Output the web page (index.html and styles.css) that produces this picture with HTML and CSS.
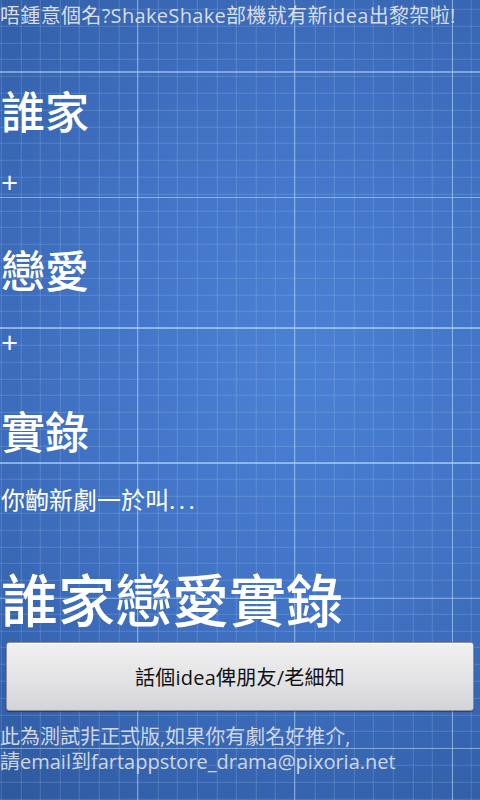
FILE: index.html
```html
<!DOCTYPE html>
<html lang="zh-Hant">
<head>
<meta charset="utf-8">
<title>ShakeShake</title>
<link rel="stylesheet" href="styles.css">
</head>
<body>
<main class="screen">
  <p class="tagline">唔鍾意個名?ShakeShake部機就有新idea出黎架啦!</p>
  <p class="part part-1">誰家</p>
  <p class="plus plus-1">+</p>
  <p class="part part-2">戀愛</p>
  <p class="plus plus-2">+</p>
  <p class="part part-3">實錄</p>
  <p class="lead">你齣新劇一於叫<span class="dots">...</span></p>
  <p class="title">誰家戀愛實錄</p>
  <button class="share" type="button">話個idea俾朋友/老細知</button>
  <div class="note">
    <p class="note-line">此為測試非正式版,如果你有劇名好推介,</p>
    <p class="note-line">請email到fartappstore_drama@pixoria.net</p>
  </div>
</main>
</body>
</html>
```

FILE: styles.css
```css
html, body {
  margin: 0;
  padding: 0;
  height: 100%;
}

body {
  font-family: "Open Sans", "Noto Sans CJK TC", sans-serif;
  background-color: #3a69b6;
  background-image:
    linear-gradient(to bottom,
      transparent 71px, rgba(190, 225, 255, 0.5) 71px, rgba(190, 225, 255, 0.5) 72.5px, transparent 72.5px,
      transparent 197px, rgba(190, 225, 255, 0.55) 197px, rgba(190, 225, 255, 0.55) 198.5px, transparent 198.5px,
      transparent 327px, rgba(190, 225, 255, 0.55) 327px, rgba(190, 225, 255, 0.55) 328.5px, transparent 328.5px,
      transparent 462px, rgba(190, 225, 255, 0.55) 462px, rgba(190, 225, 255, 0.55) 463.5px, transparent 463.5px,
      transparent 598px, rgba(190, 225, 255, 0.45) 598px, rgba(190, 225, 255, 0.45) 599.5px, transparent 599.5px,
      transparent 748px, rgba(190, 225, 255, 0.45) 748px, rgba(190, 225, 255, 0.45) 749.5px, transparent 749.5px),
    linear-gradient(to right,
      transparent 137px, rgba(190, 225, 255, 0.5) 137px, rgba(190, 225, 255, 0.5) 138.5px, transparent 138.5px,
      transparent 294px, rgba(190, 225, 255, 0.5) 294px, rgba(190, 225, 255, 0.5) 295.5px, transparent 295.5px,
      transparent 452px, rgba(190, 225, 255, 0.5) 452px, rgba(190, 225, 255, 0.5) 453.5px, transparent 453.5px),
    repeating-linear-gradient(to right,
      rgba(200, 225, 255, 0.18) 0, rgba(200, 225, 255, 0.18) 1px, transparent 1px, transparent 19.6px),
    repeating-linear-gradient(to bottom,
      rgba(200, 225, 255, 0.18) 0, rgba(200, 225, 255, 0.18) 1px, transparent 1px, transparent 16.8px),
    radial-gradient(ellipse 110% 75% at 62% 45%, #4b81d3 0%, #4274c6 40%, #3462ad 75%, #2b5495 100%);
  background-position: 0 0, 0 0, 0.8px 0, 0 8.8px, 0 0;
  background-size: 100% 100%, 100% 100%, auto, auto, 100% 100%;
  background-repeat: no-repeat, no-repeat, repeat, repeat, no-repeat;
}

.screen {
  display: flex;
  flex-direction: column;
  align-items: flex-start;
  height: 800px;
}

.screen p {
  margin: 0;
}

.tagline {
  font-size: 20px;
  line-height: 32px;
  color: #d9dde6;
  white-space: nowrap;
  letter-spacing: 0.33px;
}

.part {
  font-size: 44px;
  font-weight: 500;
  line-height: 60px;
  color: #ffffff;
  padding-left: 1px;
}

.screen .part-1 { margin-top: 50px; }
.screen .plus-1 { margin-top: 20px; }
.screen .part-2 { margin-top: 39px; }
.screen .plus-2 { margin-top: 21px; }
.screen .part-3 { margin-top: 40px; }

.plus {
  font-size: 30px;
  line-height: 40px;
  color: #ffffff;
  padding-left: 1px;
}

.screen .lead {
  font-size: 24px;
  line-height: 36px;
  color: #ffffff;
  margin-top: 20px;
  padding-left: 1px;
}

.dots {
  letter-spacing: 3.5px;
}

.screen .title {
  font-size: 57px;
  font-weight: 500;
  line-height: 70px;
  color: #ffffff;
  margin-top: 47px;
  padding-left: 1px;
}

.share {
  align-self: stretch;
  margin: 7px 6px 0;
  height: 69px;
  border: 1px solid #8a8f99;
  border-radius: 3px;
  background: linear-gradient(to bottom, #f0f0f0 0%, #e3e3e5 55%, #d3d4d8 100%);
  box-shadow: inset 0 1px 0 #ffffff, 0 1px 1px rgba(0, 0, 0, 0.35);
  font-family: "Open Sans", "Noto Sans CJK TC", sans-serif;
  font-size: 20px;
  letter-spacing: 0.25px;
  color: #111111;
  padding: 0;
}

.note {
  display: flex;
  flex-direction: column;
  margin-top: 13px;
}

.screen .note-line {
  font-size: 20px;
  line-height: 25px;
  height: 25px;
  color: #cfd6e4;
  white-space: nowrap;
}
```
